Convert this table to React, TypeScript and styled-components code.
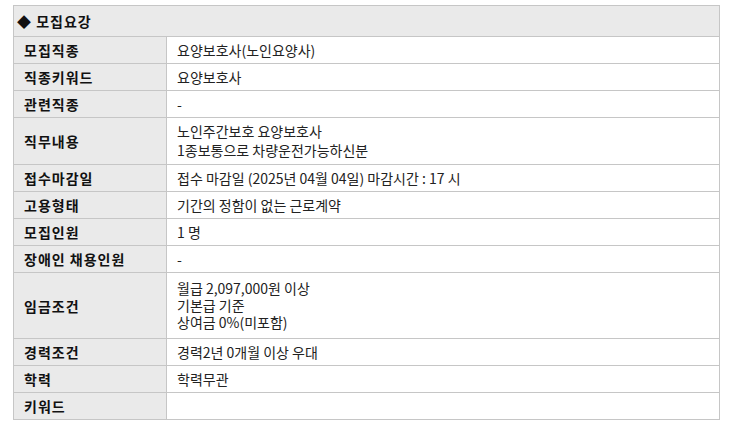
import React from 'react';
import styled, { createGlobalStyle } from 'styled-components';

const GlobalStyle = createGlobalStyle`
    body {
        margin: 0;
        background: #fff;
        font-family: "Noto Sans CJK KR", "Noto Sans", sans-serif;
        color: #222;
    }
`

const Page = styled.div`
    padding: 5px 0 0 13px;
`

const Section = styled.section`
    width: 707px;
    box-sizing: border-box;
    border: 1px solid #c6c6c6;
    border-bottom: none;
`

const SectionTitle = styled.h3`
    margin: 0;
    height: 30px;
    display: flex;
    align-items: center;
    padding-left: 3px;
    background: #eaeaea;
    border-bottom: 1px solid #c6c6c6;
    font-size: 14px;
    font-weight: bold;
    letter-spacing: 1px;
    color: #111;
`

const Table = styled.table`
    width: 100%;
    border-collapse: collapse;
    font-size: 14px;
`

const Row = styled.tr`
    border-bottom: 1px solid #c6c6c6;
`

const Label = styled.th`
    width: 142px;
    padding: 0 0 0 10px;
    text-align: left;
    background: #eaeaea;
    border-right: 1px solid #c6c6c6;
    font-weight: bold;
    color: #111;
    letter-spacing: 1px;
`

const Value = styled.td<{ $lh: number, $pad: number }>`
    height: ${p => p.$pad}px;
    padding: ${p => p.$pad}px 10px;
    line-height: ${p => p.$lh}px;
    color: #222;
    vertical-align: middle;
`

type Item = { label: string, lines: string[], lh?: number, pad?: number };

const items: Item[] = [
    { label: '모집직종', lines: ['요양보호사(노인요양사)'] },
    { label: '직종키워드', lines: ['요양보호사'] },
    { label: '관련직종', lines: ['-'] },
    { label: '직무내용', lines: ['노인주간보호 요양보호사', '1종보통으로 차량운전가능하신분'], lh: 19, pad: 4 },
    { label: '접수마감일', lines: ['접수 마감일 (2025년 04월 04일) 마감시간 : 17 시'] },
    { label: '고용형태', lines: ['기간의 정함이 없는 근로계약'] },
    { label: '모집인원', lines: ['1 명'] },
    { label: '장애인 채용인원', lines: ['-'] },
    { label: '임금조건', lines: ['월급 2,097,000원 이상', '기본급 기준', '상여금 0%(미포함)'], lh: 17, pad: 7 },
    { label: '경력조건', lines: ['경력2년 0개월 이상 우대'] },
    { label: '학력', lines: ['학력무관'] },
    { label: '키워드', lines: [] },
];

export default function App() {
    return (
        <Page>
            <GlobalStyle />
            <Section>
                <SectionTitle>◆ 모집요강</SectionTitle>
                <Table>
                    <tbody>
                        {items.map(item => {
                            const lh = item.lh ?? 26;
                            const pad = item.pad ?? 0;
                            return (
                                <Row key={item.label}>
                                    <Label>{item.label}</Label>
                                    <Value $lh={lh} $pad={pad}>
                                        {item.lines.length === 0 ? <span>&nbsp;</span> : item.lines.map((line, i) => (
                                            <div key={i}>{line}</div>
                                        ))}
                                    </Value>
                                </Row>
                            );
                        })}
                    </tbody>
                </Table>
            </Section>
        </Page>
    );
}
